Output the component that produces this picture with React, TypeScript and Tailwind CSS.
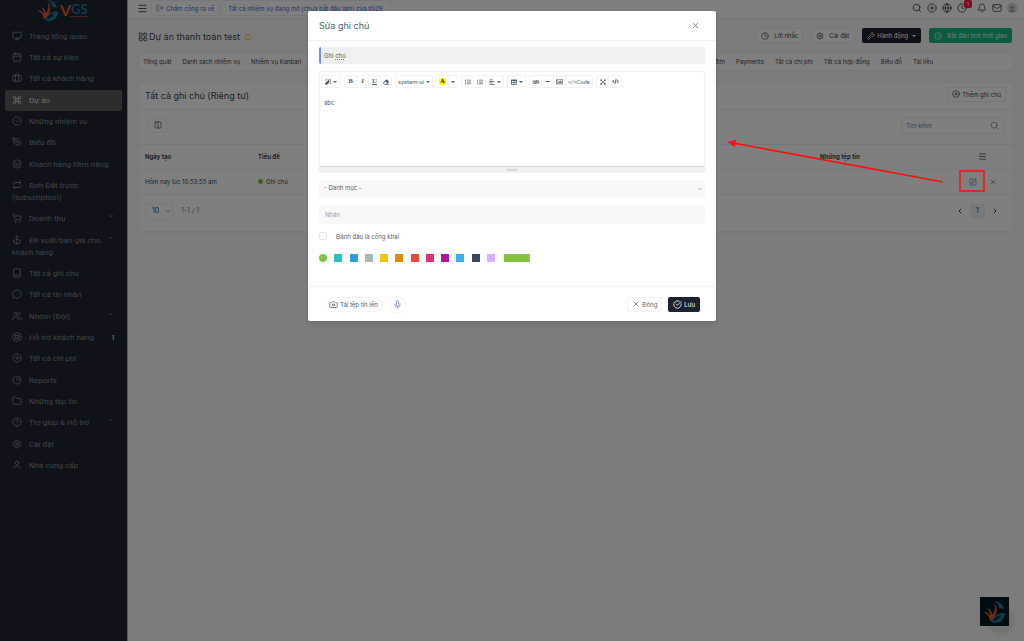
import {
  Anchor,
  Bell,
  Book,
  Briefcase,
  Calendar,
  Camera,
  ChartPie,
  ChevronDown,
  ChevronLeft,
  ChevronRight,
  CircleArrowRight,
  CircleCheckBig,
  CirclePlus,
  CircleQuestionMark,
  Clock,
  Columns2,
  Command,
  Folder,
  Globe,
  Layers,
  LayoutGrid,
  LifeBuoy,
  LogOut,
  Mail,
  Menu,
  MessageCircle,
  Mic,
  Monitor,
  PenTool,
  Repeat,
  Search,
  Settings,
  ShoppingCart,
  SquarePen,
  Star,
  User,
  Users,
  Wrench,
  X,
} from "lucide-react";
import type { LucideIcon } from "lucide-react";
import {
  FaAlignLeft,
  FaCode,
  FaEraser,
  FaExpandArrowsAlt,
  FaLink,
  FaListOl,
  FaListUl,
  FaMagic,
  FaMinus,
  FaRegImage,
  FaTable,
} from "react-icons/fa";
import type { ReactNode } from "react";

type NavItem = {
  icon: LucideIcon;
  label: string;
  active?: boolean;
  arrow?: boolean;
  count?: number;
};

const navItems: NavItem[] = [
  { icon: Monitor, label: "Trang tổng quan" },
  { icon: Calendar, label: "Tất cả sự kiện" },
  { icon: Briefcase, label: "Tất cả khách hàng" },
  { icon: Command, label: "Dự án", active: true },
  { icon: CircleCheckBig, label: "Những nhiệm vụ" },
  { icon: PenTool, label: "Biểu đồ" },
  { icon: Layers, label: "Khách hàng tiềm năng" },
  { icon: Repeat, label: "Đơn Đặt trước (subscription)" },
  { icon: ShoppingCart, label: "Doanh thu", arrow: true },
  { icon: Anchor, label: "Đề xuất/báo giá cho khách hàng", arrow: true },
  { icon: Book, label: "Tất cả ghi chú" },
  { icon: MessageCircle, label: "Tất cả tin nhắn" },
  { icon: Users, label: "Nhóm (Đội)", arrow: true },
  { icon: LifeBuoy, label: "Hỗ trợ khách hàng", count: 1 },
  { icon: CircleArrowRight, label: "Tất cả chi phí" },
  { icon: ChartPie, label: "Reports" },
  { icon: Folder, label: "Những tệp tin" },
  { icon: CircleQuestionMark, label: "Trợ giúp & Hỗ trợ", arrow: true },
  { icon: Settings, label: "Cài đặt" },
  { icon: User, label: "Nhà cung cấp" },
];

const leftTabs = ["Tổng quát", "Danh sách nhiệm vụ", "Nhiệm vụ Kanban"];
const rightTabs = ["Hóa đơn", "Payments", "Tất cả chi phí", "Tất cả hợp đồng", "Biểu đồ", "Tài liệu"];

const colors = [
  "bg-[#29c2c2]",
  "bg-[#2d9cdb]",
  "bg-[#aab7b7]",
  "bg-[#f1c40f]",
  "bg-[#e18a00]",
  "bg-[#e74c3c]",
  "bg-[#d43480]",
  "bg-[#ad159e]",
  "bg-[#37b4e1]",
  "bg-[#34495e]",
  "bg-[#dbadff]",
];

function Emblem({ className }: { className: string }) {
  return (
    <svg viewBox="0 0 22 22" className={className} aria-hidden="true">
      <path d="M10 0C15 0 19 3 20 8L15 7C15 4 13 2 10 0Z" fill="#1d7896" />
      <path d="M7 20C9 14 14 12 21 12C21 18 17 22 11 22C9 22 8 21 7 20Z" fill="#1d7896" />
      <path d="M9 20C10 16 13 15 17 14C16 17 13 20 9 20Z" fill="#0c3346" />
      <path
        d="M0 11C2 10 4 12 6 15C6 11 5 9 3 7C6 8 8 10 8 14C11 11 12 6 10 2C14 6 14 12 8 19L6 20C6 16 3 13 0 11Z"
        fill="#e4572e"
      />
    </svg>
  );
}

function Sidebar() {
  return (
    <aside className="w-32 shrink-0 border-r border-[#aaaeb3] bg-[#1b2733]">
      <a href="#" aria-label="VGS" className="flex h-[26px] items-start justify-center border-b border-[#212d39]">
        <Emblem className="size-[21px]" />
        <svg viewBox="0 0 30 24" className="h-6 w-[30px] overflow-visible">
          <text x="1" y="16" fontSize="16" fontWeight="700" fontFamily="Lato, sans-serif" fill="#e4572e">V</text>
          <text x="12" y="14" fontSize="13" fontWeight="700" fontFamily="Lato, sans-serif" fill="#1d7896">GS</text>
          <path d="M11 16.500H29" stroke="#8a4234" strokeWidth="1" />
        </svg>
      </a>
      <ul className="px-[5px]">
        {navItems.map(({ icon: Icon, label, active, arrow, count }) => (
          <li key={label} className="nth-[3n]:mb-px">
            <a
              href="#"
              className={`flex items-start rounded-xs pt-[5px] pr-2 pb-1 pl-[7px] font-[Roboto,sans-serif] text-[8px] leading-3 ${
                active ? "bg-[#575a5f] text-[#d5d6d8]" : "text-[#7f858c]"
              }`}
            >
              <span className="grow">
                <Icon className="mr-[7px] inline-block size-[10px] align-[-2px]" strokeWidth={2} />
                {label}
              </span>
              {arrow && <ChevronDown className="size-[6px] shrink-0" strokeWidth={3} />}
              {count && <span className="font-[Inter,sans-serif] text-[6px] font-bold text-[#c5c8cb]">{count}</span>}
            </a>
          </li>
        ))}
      </ul>
    </aside>
  );
}

function TopBar() {
  return (
    <header className="flex h-[19px] items-start border-b border-[#e8eaed] bg-white pr-[7px] pl-[9px] text-[#39434d]">
      <button aria-label="Menu" className="mt-[3px]">
        <Menu className="size-[11px]" />
      </button>
      <button className="ml-[3px] flex h-4 items-center gap-0.5 rounded-xs border border-[#eceef0] px-1 text-[6px] text-[#4467d8]">
        <LogOut className="size-2" />
        Chấm công ra về
      </button>
      <a href="#" className="ml-px flex h-4 items-center rounded-xs border border-[#eceef0] px-[7px] text-[6px] text-[#4467d8]">
        Tất cả nhiệm vụ đang mở (chưa bắt đầu làm) của tôi29
      </a>
      <div className="mt-[3px] ml-auto flex items-center gap-[5px]">
        <button aria-label="Tìm kiếm"><Search className="size-2.5" /></button>
        <button aria-label="Thêm"><CirclePlus className="size-2.5" /></button>
        <button aria-label="Ngôn ngữ"><Globe className="size-2.5" /></button>
        <button aria-label="Chấm công" className="relative mr-[5px]">
          <Clock className="size-2.5" />
          <span className="absolute -top-[3px] left-[7px] size-2 rounded-xs bg-[#ff1744] text-[5px] leading-2 text-white">1</span>
        </button>
        <button aria-label="Thông báo"><Bell className="size-2.5" /></button>
        <button aria-label="Tin nhắn"><Mail className="size-2.5" /></button>
        <button aria-label="Tài khoản" className="flex size-2.5 items-end justify-center overflow-hidden rounded-full bg-[#d0d4dc] text-[#9ca3b0]">
          <User className="size-2" fill="currentColor" />
        </button>
      </div>
    </header>
  );
}

function ProjectHeader() {
  return (
    <div className="flex items-center text-[#39434d]">
      <div className="flex items-center pt-0.5">
        <LayoutGrid className="size-[10px]" />
        <h1 className="ml-px text-[9px]">Dự án thanh toán test</h1>
        <Star className="ml-1 size-2 text-[#f5b400]" />
      </div>
      <div className="ml-auto flex h-[15px] items-stretch gap-2 pr-0.5 text-[6px]">
        <button className="flex items-center gap-[5px] rounded-xs border border-[#f0f1f3] bg-white px-1">
          <Clock className="size-2" /> Lời nhắc
        </button>
        <button className="flex items-center gap-[5px] rounded-xs border border-[#f0f1f3] bg-white px-1">
          <Settings className="size-2" /> Cài đặt
        </button>
        <button className="flex items-center gap-0.5 rounded-xs bg-[#1c222e] px-[5px] text-white">
          <Wrench className="size-2" /> Hành động
          <span className="ml-0.5 border-x-2 border-t-2 border-x-transparent border-t-white" />
        </button>
        <button className="flex items-center gap-[5px] rounded-xs bg-[#10b981] px-[5px] text-[#e3f7ef]">
          <Clock className="size-2" /> Bắt đầu tính thời gian
        </button>
      </div>
    </div>
  );
}

function ProjectTabs() {
  return (
    <nav className="mt-2 flex h-[19px] items-center rounded-xs border border-[#f0f1f3] bg-white px-1 text-[6px] text-[#39434d]">
      <div className="flex gap-[11px]">
        {leftTabs.map((tab) => (
          <a key={tab} href="#">{tab}</a>
        ))}
      </div>
      <div className="mr-[76px] ml-auto flex gap-[11px]">
        {rightTabs.map((tab) => (
          <a key={tab} href="#">{tab}</a>
        ))}
      </div>
    </nav>
  );
}

function NotesCard() {
  return (
    <section className="mt-[11px] rounded-xs border border-[#f2f3f5] bg-white text-[#39434d] shadow-xs">
      <div className="flex h-[27px] items-center justify-between border-b border-[#eceef0] pr-[7px] pl-1.5">
        <h2 className="text-[9px]">Tất cả ghi chú (Riêng tư)</h2>
        <button className="mt-1 flex h-[15px] items-center gap-0.5 self-start rounded-xs border border-[#eceef0] px-1 text-[6px]">
          <CirclePlus className="size-2" /> Thêm ghi chú
        </button>
      </div>
      <div className="flex h-[34px] items-center justify-between px-[9px] pb-[3px]">
        <button aria-label="Cột" className="flex h-[15px] w-[19px] items-center justify-center rounded-xs border border-[#eceef0]">
          <Columns2 className="size-2" />
        </button>
        <label className="flex h-[17px] w-[103px] items-center rounded-xs border border-[#eceef0] px-1">
          <input aria-label="Tìm kiếm" placeholder="Tìm kiếm" className="w-full min-w-0 text-[6px] outline-none placeholder:text-[#7b858f]" />
          <Search className="size-[9px] shrink-0 text-[#7b858f]" />
        </label>
      </div>
      <table className="w-full table-fixed text-left text-[6px]">
        <colgroup>
          <col className="w-[113px]" />
          <col />
          <col className="w-[138px]" />
          <col className="w-[61px]" />
        </colgroup>
        <thead>
          <tr className="h-[25px] border-y border-[#eceef0]">
            <th className="pl-1.5 font-bold">Ngày tạo</th>
            <th className="pl-1.5 font-bold">Tiêu đề</th>
            <th className="pl-1.5 font-bold">Những tệp tin</th>
            <th aria-label="Thao tác"><Menu className="mx-auto size-[9px]" /></th>
          </tr>
        </thead>
        <tbody>
          <tr className="h-[25px] border-b border-[#eceef0]">
            <td className="pl-1.5">Hôm nay lúc 10:53:55 am</td>
            <td className="pl-1.5">
              <a href="#" className="flex items-center gap-[3px]">
                <span className="size-[5px] rounded-full bg-[#7fc41c]" /> Ghi chú
              </a>
            </td>
            <td />
            <td>
              <div className="flex justify-center gap-3 text-[#69727b]">
                <button aria-label="Sửa"><SquarePen className="size-2" /></button>
                <button aria-label="Xóa"><X className="size-2" /></button>
              </div>
            </td>
          </tr>
        </tbody>
      </table>
      <div className="flex h-9 items-center pr-[14px] pb-[3px] pl-1.5 text-[7px]">
        <div className="relative flex items-center">
          <select aria-label="Số dòng" className="h-[17px] w-7 appearance-none rounded-xs border border-[#eceef0] pl-1.5">
            <option>10</option>
          </select>
          <ChevronDown className="pointer-events-none absolute right-0.5 size-[6px]" />
        </div>
        <span className="ml-2 text-[#7b858f]">1-1 / 1</span>
        <div className="ml-auto flex items-center gap-1.5">
          <button aria-label="Trang trước"><ChevronLeft className="size-2" strokeWidth={3} /></button>
          <button className="size-[15px] rounded-xs bg-[#eef0f2]">1</button>
          <button aria-label="Trang sau"><ChevronRight className="size-2" strokeWidth={3} /></button>
        </div>
      </div>
    </section>
  );
}

function ToolGroup({ children }: { children: ReactNode }) {
  return (
    <div className="flex h-[13px] divide-x divide-[#f3f4f5] rounded-xs border border-[#f1f2f3]">{children}</div>
  );
}

function Tool({ label, className, children }: { label: string; className: string; children: ReactNode }) {
  return (
    <button type="button" aria-label={label} className={`flex items-center justify-center gap-0.5 ${className}`}>
      {children}
    </button>
  );
}

function Caret() {
  return <span className="border-x-2 border-t-2 border-x-transparent border-t-[#4e5e6a]" />;
}

function EditorToolbar() {
  return (
    <div className="flex gap-[3px] px-px pt-[3px] font-[Roboto,sans-serif] text-[6px] text-[#4e5e6a]">
      <ToolGroup>
        <Tool label="Kiểu" className="w-[18px]"><FaMagic className="size-[6px]" /><Caret /></Tool>
      </ToolGroup>
      <ToolGroup>
        <Tool label="Đậm" className="w-3"><b className="font-[Liberation_Serif,serif] text-[7px]">B</b></Tool>
        <Tool label="Nghiêng" className="w-3"><i className="font-[Liberation_Serif,serif] text-[7px] font-bold">I</i></Tool>
        <Tool label="Gạch chân" className="w-3"><u className="font-[Liberation_Serif,serif] text-[7px] font-bold">U</u></Tool>
        <Tool label="Xóa định dạng" className="w-2.5"><FaEraser className="size-[6px]" /></Tool>
      </ToolGroup>
      <ToolGroup>
        <Tool label="Phông chữ" className="w-9"><span>system-ui</span><Caret /></Tool>
      </ToolGroup>
      <ToolGroup>
        <Tool label="Màu chữ" className="w-3">
          <b className="bg-[#ffff00] px-px font-[Liberation_Serif,serif] text-[6px] leading-[7px] text-black">A</b>
        </Tool>
        <Tool label="Chọn màu" className="w-2"><Caret /></Tool>
      </ToolGroup>
      <ToolGroup>
        <Tool label="Danh sách" className="w-3"><FaListUl className="size-[6px]" /></Tool>
        <Tool label="Danh sách số" className="w-3"><FaListOl className="size-[6px]" /></Tool>
        <Tool label="Căn lề" className="w-[17px]"><FaAlignLeft className="size-[6px]" /><Caret /></Tool>
      </ToolGroup>
      <ToolGroup>
        <Tool label="Bảng" className="w-[17px]"><FaTable className="size-[6px]" /><Caret /></Tool>
      </ToolGroup>
      <ToolGroup>
        <Tool label="Liên kết" className="w-3"><FaLink className="size-[6px] rotate-45" /></Tool>
        <Tool label="Đường kẻ" className="w-3"><FaMinus className="size-[5px]" /></Tool>
        <Tool label="Hình ảnh" className="w-3"><FaRegImage className="size-[7px]" /></Tool>
        <Tool label="Code" className="w-[26px]"><span className="italic">&lt;/&gt;Code</span></Tool>
      </ToolGroup>
      <ToolGroup>
        <Tool label="Toàn màn hình" className="w-3"><FaExpandArrowsAlt className="size-[6px]" /></Tool>
        <Tool label="Mã nguồn" className="w-3"><FaCode className="size-[7px]" /></Tool>
      </ToolGroup>
    </div>
  );
}

function EditNoteModal() {
  return (
    <div className="absolute inset-0 bg-black/50">
      <form role="dialog" aria-label="Sửa ghi chú" className="mx-auto mt-[11px] w-[408px] rounded-xs bg-white text-[#4e5e6a] shadow-md">
        <div className="flex h-[30px] items-center justify-between border-b border-[#f0f1f2] pr-4 pl-[11px]">
          <h2 className="text-[9px]">Sửa ghi chú</h2>
          <button type="button" aria-label="Đóng"><X className="size-[9px]" /></button>
        </div>

        <div className="px-[11px] pt-1.5 text-[6px]">
          <div className="flex h-[17px] items-center rounded-xs border-l-2 border-[#6690f4] bg-[#efefef] pl-[3px]">
            <p
              contentEditable
              suppressContentEditableWarning
              role="textbox"
              aria-label="Tiêu đề"
              className="grow outline-none"
            >
              Ghi <span className="underline decoration-[#e05555] decoration-dotted">chú</span>
            </p>
          </div>

          <div className="mt-[7px] rounded-xs border border-[#f1f2f3]">
            <EditorToolbar />
            <textarea aria-label="Nội dung" defaultValue="abc" className="block h-[78px] w-full resize-none px-1 pt-2.5 outline-none" />
            <div className="flex h-1.5 items-center justify-center border-t border-[#d5d7d9] bg-[#f1f1f1]">
              <span className="h-0.5 w-2.5 bg-[#d7d7d7]" />
            </div>
          </div>

          <div className="relative mt-[7px] flex items-center">
            <select aria-label="Danh mục" className="h-[18px] w-full appearance-none rounded-xs bg-[#f8f8f8] px-[5px] pb-[3px]">
              <option>- Danh mục -</option>
            </select>
            <ChevronDown className="pointer-events-none absolute right-0.5 size-[6px]" />
          </div>
          <input aria-label="Nhãn" placeholder="Nhãn" className="mt-[7px] block h-[19px] w-full rounded-xs bg-[#f8f8f8] px-1.5 outline-none placeholder:text-[#9a9fa4]" />

          <label className="mt-[7px] flex h-2.5 items-center gap-[9px]">
            <input type="checkbox" className="size-2 appearance-none rounded-xs border border-[#e3e5e8]" />
            Đánh dấu là công khai
          </label>

          <div className="mt-[13px] flex gap-[9px]">
            <div className="flex w-44 justify-between">
              <button type="button" aria-label="#83c340" className="size-2 rounded-full bg-[#83c340]" />
              {colors.map((color) => (
                <button key={color} type="button" aria-label={color} className={`size-2 ${color}`} />
              ))}
            </div>
            <input type="button" aria-label="Chọn màu" className="h-2 w-[26px] bg-[#83c340]" />
          </div>
        </div>

        <div className="mt-6 flex h-[35px] items-center border-t border-[#f0f1f2] px-4 text-[6px]">
          <button type="button" className="flex h-[15px] items-center gap-0.5 rounded-full border border-[#f1f2f3] px-1">
            <Camera className="size-[9px]" /> Tải tệp tin lên
          </button>
          <button type="button" aria-label="Ghi âm" className="ml-1.5 flex size-[17px] items-center justify-center rounded-full border border-[#f1f2f3] text-[#6c7fa8]">
            <Mic className="size-[9px]" />
          </button>
          <button type="button" className="ml-auto flex h-[15px] items-center gap-0.5 rounded-xs border border-[#f1f2f3] px-1">
            <X className="size-2" /> Đóng
          </button>
          <button type="submit" className="ml-1.5 flex h-[15px] items-center gap-0.5 rounded-xs bg-[#1c222e] px-[5px] text-white">
            <CircleCheckBig className="size-[9px]" /> Lưu
          </button>
        </div>
      </form>
    </div>
  );
}

export default function App() {
  return (
    <div className="relative flex min-h-screen bg-[#f8f9fa] font-[Inter,sans-serif]">
      <Sidebar />
      <div className="min-w-0 grow">
        <TopBar />
        <main className="px-2.5 pt-[9px]">
          <ProjectHeader />
          <ProjectTabs />
          <NotesCard />
        </main>
      </div>

      {/* Chat launcher */}
      <div className="absolute right-2.5 bottom-2.5 size-[26px] rounded-full bg-[#e8e9ea] shadow-md" />
      <button aria-label="Chat" className="absolute right-[15px] bottom-[15px] flex size-[29px] items-center justify-center bg-[#041a22]">
        <Emblem className="size-[22px]" />
      </button>

      <EditNoteModal />

      {/* Callout on the edit button */}
      <svg viewBox="0 0 300 80" className="pointer-events-none absolute top-[130px] right-0 h-20 w-[300px]" aria-hidden="true">
        <path d="M219 52L9 13" stroke="#ff0d0d" strokeWidth="1.500" />
        <path d="M3 12L12 10L11 17Z" fill="#ff0d0d" />
        <rect x="236" y="41" width="24" height="20" fill="none" stroke="#ff0d0d" strokeWidth="1.500" />
      </svg>
    </div>
  );
}
